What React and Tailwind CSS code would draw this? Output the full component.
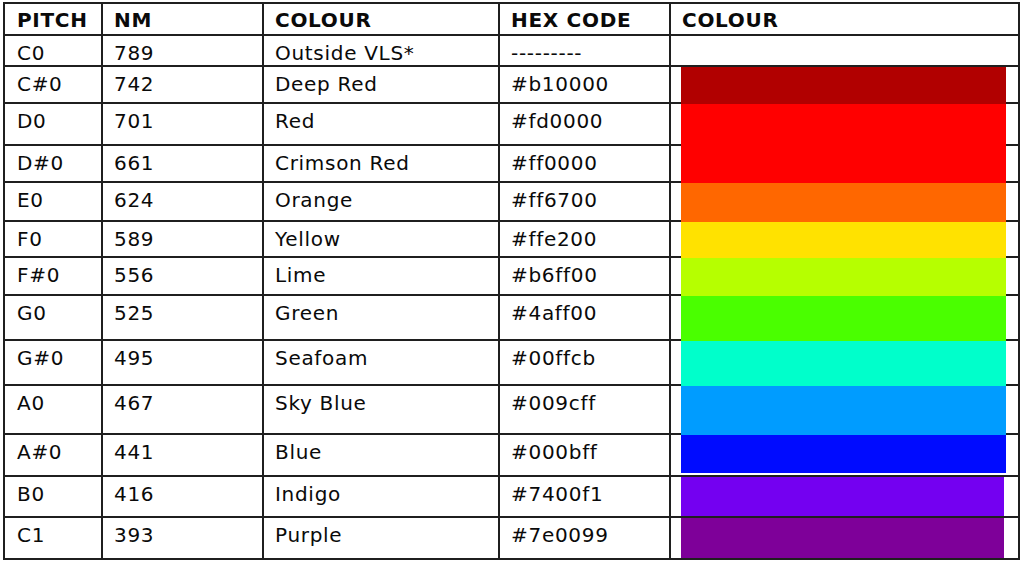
const rows = [
  { pitch: "C0", nm: "789", name: "Outside VLS*", hex: "---------", swatch: null },
  { pitch: "C#0", nm: "742", name: "Deep Red", hex: "#b10000", swatch: "bg-[#b10000]", fit: "cover" },
  { pitch: "D0", nm: "701", name: "Red", hex: "#fd0000", swatch: "bg-[#ff0000]", fit: "cover" },
  { pitch: "D#0", nm: "661", name: "Crimson Red", hex: "#ff0000", swatch: "bg-[#ff0000]", fit: "cover" },
  { pitch: "E0", nm: "624", name: "Orange", hex: "#ff6700", swatch: "bg-[#ff6700]", fit: "cover" },
  { pitch: "F0", nm: "589", name: "Yellow", hex: "#ffe200", swatch: "bg-[#ffe200]", fit: "cover" },
  { pitch: "F#0", nm: "556", name: "Lime", hex: "#b6ff00", swatch: "bg-[#b6ff00]", fit: "cover" },
  { pitch: "G0", nm: "525", name: "Green", hex: "#4aff00", swatch: "bg-[#4aff00]", fit: "cover" },
  { pitch: "G#0", nm: "495", name: "Seafoam", hex: "#00ffcb", swatch: "bg-[#00ffcb]", fit: "cover" },
  { pitch: "A0", nm: "467", name: "Sky Blue", hex: "#009cff", swatch: "bg-[#009cff]", fit: "cover" },
  { pitch: "A#0", nm: "441", name: "Blue", hex: "#000bff", swatch: "bg-[#000bff]", fit: "short" },
  { pitch: "B0", nm: "416", name: "Indigo", hex: "#7400f1", swatch: "bg-[#7400f1]", fit: "full" },
  { pitch: "C1", nm: "393", name: "Purple", hex: "#7e0099", swatch: "bg-[#7e0099]", fit: "full" },
];

const cell = "border-r-2 border-b-2 border-[#1f1f1f] pt-[6px] pl-[11px] leading-[22px]";
const head = "border-r-2 border-b-2 border-[#1f1f1f] pt-[5px] pl-[11px] leading-[22px] font-bold";

const fitClass = {
  cover: "h-[calc(100%+2px)] w-[325px]",
  short: "h-[calc(100%-2px)] w-[325px]",
  full: "h-full w-[323px]",
};

export default function App() {
  return (
    <div className="min-h-screen bg-white pt-[2px] pl-[3px] text-[20px] tracking-[0.7px] text-[#0a0a0a] font-['DejaVu_Sans',sans-serif]">
      <div className="grid w-fit grid-cols-[98px_161px_236px_171px_349px] grid-rows-[32px_31px_37px_42px_37px_39px_36px_38px_45px_45px_49px_42px_41px_42px] border-l-2 border-t-2 border-[#1f1f1f]">
        {/* header */}
        <div className={head + " pl-[12px]"}>PITCH</div>
        <div className={head}>NM</div>
        <div className={head}>COLOUR</div>
        <div className={head}>HEX CODE</div>
        <div className={head}>COLOUR</div>

        {rows.map((r) => (
          <div key={r.pitch} className="contents">
            <div className={cell + " pl-[12px]"}>{r.pitch}</div>
            <div className={cell}>{r.nm}</div>
            <div className={cell}>{r.name}</div>
            <div className={cell}>{r.hex}</div>
            <div className="border-r-2 border-b-2 border-[#1f1f1f]">
              {r.swatch && (
                <div className={"relative ml-[10px] " + r.swatch + " " + fitClass[r.fit]} />
              )}
            </div>
          </div>
        ))}
      </div>
    </div>
  );
}
